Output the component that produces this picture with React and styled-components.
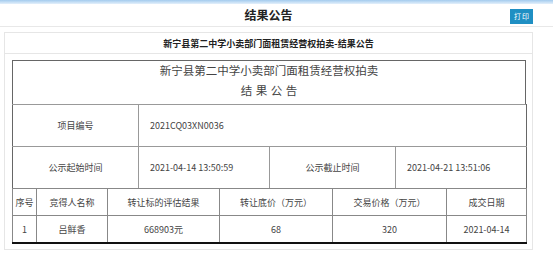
import React from 'react';
import styled, { createGlobalStyle } from 'styled-components';

const GlobalStyle = createGlobalStyle`
    body {
        margin: 0;
        background: #ffffff;
        font-family: "Noto Sans CJK SC", "Liberation Sans", sans-serif;
        color: #333;
    }
`;

const Page = styled.div`
    width: 553px;
`;

const TopStrip = styled.div`
    height: 4px;
    background: linear-gradient(#a3cbee, #e4f0fb);
`;

const Header = styled.div`
    border-bottom: 1px solid #e8e8e8;
`;

const HeaderInner = styled.div`
    display: grid;
    grid-template-columns: 1fr auto 1fr;
    height: 22px;
    margin-left: 4px;
    width: 529px;
`;

const Title = styled.h1`
    margin: 0;
    align-self: center;
    font-size: 12px;
    font-weight: bold;
    color: #222;
    line-height: 14px;
`;

const PrintButton = styled.button`
    justify-self: end;
    align-self: end;
    margin-bottom: 2px;
    width: 23px;
    height: 15px;
    padding: 0 0 0 1px;
    border: none;
    background-color: #1f8fc3;
    color: #ffffff;
    font-family: inherit;
    font-size: 7px;
    letter-spacing: 1px;
    line-height: 15px;
    cursor: pointer;
`;

const Panel = styled.div`
    margin: 5px 0 0 4px;
    width: 529px;
    box-sizing: border-box;
    border: 1px solid #e6e6e6;
`;

const PanelHead = styled.div`
    height: 20px;
    border-bottom: 1px solid #e6e6e6;
    display: flex;
    align-items: center;
    justify-content: center;
    font-size: 9px;
    font-weight: bold;
    color: #222;
`;

const Doc = styled.div`
    margin: 6px 6px 5px 7px;
    display: flex;
    flex-direction: column;
`;

const DocHead = styled.div`
    height: 43px;
    border: 1px solid #666;
    border-bottom: none;
    display: flex;
    flex-direction: column;
    align-items: center;
    color: #444;
    font-size: 11.5px;
    line-height: 16px;
`;

const DocTitle = styled.div`
    margin-top: 1px;
`;

const DocSub = styled.div`
    margin-top: 4px;
    letter-spacing: 3.5px;
    padding-left: 3.5px;
`;

const Table = styled.table`
    width: 514px;
    table-layout: fixed;
    border-collapse: collapse;
    font-size: 9px;
    color: #444;
`;

const InfoTable = styled(Table)`
    td {
        height: 41px;
        border: 1px solid #999;
        padding: 0;
    }
    td:first-child {
        border-left-color: #666;
    }
    td:last-child {
        border-right-color: #666;
    }
    tr:last-child td {
        border-bottom: none;
    }
`;

const ResultTable = styled(Table)`
    border: 1px solid #111;
    border-bottom-width: 2px;
    td {
        height: 26px;
        border: 1px solid #888;
        padding: 0;
        text-align: center;
    }
`;

const Cell = styled.td`
    text-align: ${p => (p.$value ? 'left' : 'center')};
    padding-left: ${p => (p.$value ? '11px' : '0')} !important;
`;

const resultCols = [24, 71, 112, 113, 114, 80];
const resultHead = ['序号', '竞得人名称', '转让标的评估结果', '转让底价（万元）', '交易价格（万元）', '成交日期'];
const resultRow = ['1', '吕鲜香', '668903元', '68', '320', '2021-04-14'];

const App = () => {
    return (
        <Page>
            <GlobalStyle />
            <TopStrip />
            <Header>
                <HeaderInner>
                    <span />
                    <Title>结果公告</Title>
                    <PrintButton>打印</PrintButton>
                </HeaderInner>
            </Header>
            <Panel>
                <PanelHead>新宁县第二中学小卖部门面租赁经营权拍卖-结果公告</PanelHead>
                <Doc>
                    <DocHead>
                        <DocTitle>新宁县第二中学小卖部门面租赁经营权拍卖</DocTitle>
                        <DocSub>结果公告</DocSub>
                    </DocHead>
                    <InfoTable>
                        <colgroup>
                            <col style={{ width: 126 }} />
                            <col style={{ width: 131 }} />
                            <col style={{ width: 126 }} />
                            <col style={{ width: 131 }} />
                        </colgroup>
                        <tbody>
                            <tr>
                                <Cell>项目编号</Cell>
                                <Cell $value colSpan={3}>2021CQ03XN0036</Cell>
                            </tr>
                            <tr>
                                <Cell>公示起始时间</Cell>
                                <Cell $value>2021-04-14 13:50:59</Cell>
                                <Cell>公示截止时间</Cell>
                                <Cell $value>2021-04-21 13:51:06</Cell>
                            </tr>
                        </tbody>
                    </InfoTable>
                    <ResultTable>
                        <colgroup>
                            {resultCols.map((w, i) => <col key={i} style={{ width: w }} />)}
                        </colgroup>
                        <tbody>
                            <tr>
                                {resultHead.map(t => <td key={t}>{t}</td>)}
                            </tr>
                            <tr>
                                {resultRow.map(t => <td key={t}>{t}</td>)}
                            </tr>
                        </tbody>
                    </ResultTable>
                </Doc>
            </Panel>
        </Page>
    );
}

export default App
